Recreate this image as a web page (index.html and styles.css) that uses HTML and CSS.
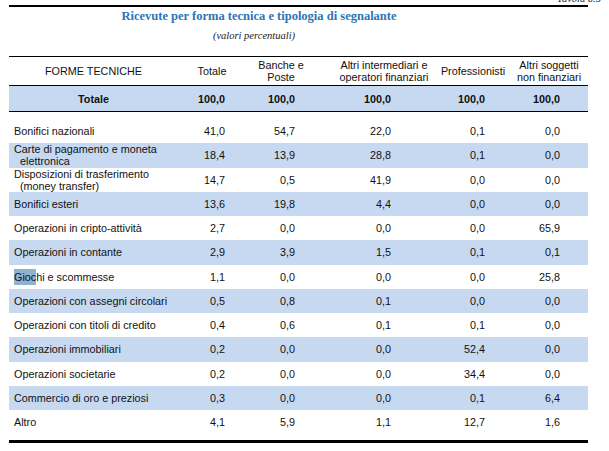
FILE: index.html
```html
<!DOCTYPE html>
<html lang="it">
<head>
<meta charset="utf-8">
<title>Ricevute per forma tecnica e tipologia di segnalante</title>
<link rel="stylesheet" href="styles.css">
</head>
<body>
<div class="page">
  <div class="tavola"><span>Tavola 6.5</span></div>
  <div class="sheet">
    <div class="caption">
      <div class="title">Ricevute per forma tecnica e tipologia di segnalante</div>
      <div class="subtitle">(valori percentuali)</div>
    </div>
    <div class="row head">
      <div>FORME TECNICHE</div>
      <div>Totale</div>
      <div>Banche e<br>Poste</div>
      <div class="h3">Altri intermediari e<br>operatori finanziari</div>
      <div>Professionisti</div>
      <div>Altri soggetti<br>non finanziari</div>
    </div>
    <div class="row total">
      <div class="lab-c">Totale</div>
      <div class="num">100,0</div>
      <div class="num">100,0</div>
      <div class="num">100,0</div>
      <div class="num">100,0</div>
      <div class="num">100,0</div>
    </div>
    <div class="spacer"></div>
    <div class="row item">
      <div class="lab">Bonifici nazionali</div>
      <div class="num">41,0</div><div class="num">54,7</div><div class="num">22,0</div><div class="num">0,1</div><div class="num">0,0</div>
    </div>
    <div class="row item alt">
      <div class="lab wrap">Carte di pagamento e moneta<br>elettronica</div>
      <div class="num">18,4</div><div class="num">13,9</div><div class="num">28,8</div><div class="num">0,1</div><div class="num">0,0</div>
    </div>
    <div class="row item">
      <div class="lab wrap">Disposizioni di trasferimento<br>(money transfer)</div>
      <div class="num">14,7</div><div class="num">0,5</div><div class="num">41,9</div><div class="num">0,0</div><div class="num">0,0</div>
    </div>
    <div class="row item alt">
      <div class="lab">Bonifici esteri</div>
      <div class="num">13,6</div><div class="num">19,8</div><div class="num">4,4</div><div class="num">0,0</div><div class="num">0,0</div>
    </div>
    <div class="row item">
      <div class="lab">Operazioni in cripto-attività</div>
      <div class="num">2,7</div><div class="num">0,0</div><div class="num">0,0</div><div class="num">0,0</div><div class="num">65,9</div>
    </div>
    <div class="row item alt">
      <div class="lab">Operazioni in contante</div>
      <div class="num">2,9</div><div class="num">3,9</div><div class="num">1,5</div><div class="num">0,1</div><div class="num">0,1</div>
    </div>
    <div class="row item">
      <div class="lab"><span class="sel">Gioc</span>hi e scommesse</div>
      <div class="num">1,1</div><div class="num">0,0</div><div class="num">0,0</div><div class="num">0,0</div><div class="num">25,8</div>
    </div>
    <div class="row item alt">
      <div class="lab">Operazioni con assegni circolari</div>
      <div class="num">0,5</div><div class="num">0,8</div><div class="num">0,1</div><div class="num">0,0</div><div class="num">0,0</div>
    </div>
    <div class="row item">
      <div class="lab">Operazioni con titoli di credito</div>
      <div class="num">0,4</div><div class="num">0,6</div><div class="num">0,1</div><div class="num">0,1</div><div class="num">0,0</div>
    </div>
    <div class="row item alt">
      <div class="lab">Operazioni immobiliari</div>
      <div class="num">0,2</div><div class="num">0,0</div><div class="num">0,0</div><div class="num">52,4</div><div class="num">0,0</div>
    </div>
    <div class="row item">
      <div class="lab">Operazioni societarie</div>
      <div class="num">0,2</div><div class="num">0,0</div><div class="num">0,0</div><div class="num">34,4</div><div class="num">0,0</div>
    </div>
    <div class="row item alt">
      <div class="lab">Commercio di oro e preziosi</div>
      <div class="num">0,3</div><div class="num">0,0</div><div class="num">0,0</div><div class="num">0,1</div><div class="num">6,4</div>
    </div>
    <div class="row item">
      <div class="lab">Altro</div>
      <div class="num">4,1</div><div class="num">5,9</div><div class="num">1,1</div><div class="num">12,7</div><div class="num">1,6</div>
    </div>
    <div class="end-rule"></div>
  </div>
</div>
</body>
</html>
```

FILE: styles.css
```css
* { box-sizing: content-box; }
html, body { margin: 0; padding: 0; background: #fff; }
body {
  font-family: "Liberation Sans", Arial, sans-serif;
  color: #111;
}
.page { width: 609px; }

.tavola {
  height: 5px;
  display: flex;
  justify-content: flex-end;
  align-items: flex-end;
  padding-right: 8px;
}
.tavola span {
  font: italic 10.5px/12px "Liberation Serif", "Times New Roman", serif;
  color: #222;
}

.sheet {
  margin-left: 9px;
  width: 579px;
  border-top: 2px solid #000;
}

.caption {
  text-align: center;
  padding: 1px 79px 13px 0;
  border-bottom: 1px solid #000;
}
.title {
  font: bold 12.5px/16px "Liberation Serif", "Times New Roman", serif;
  color: #2e74b5;
}
.subtitle {
  font: italic 10.5px/14px "Liberation Serif", "Times New Roman", serif;
  margin-top: 5px;
  padding-right: 10px;
  color: #222;
}

.row {
  display: grid;
  grid-template-columns: 169px 68px 70px 120px 74px 78px;
  align-items: center;
  font-size: 10.8px;
}

.head {
  height: 28px;
  line-height: 12.5px;
  text-align: center;
}
.head .h3 { padding-left: 16px; }

.total {
  height: 25px;
  background: #c6d9f1;
  border-top: 1px solid #000;
  border-bottom: 1px solid #000;
  font-weight: bold;
}
.lab-c { text-align: center; }

.spacer { height: 7px; }

.item {
  height: 24.25px;
  line-height: 12px;
}
.alt { background: #c6d9f1; }

.lab { padding-left: 5px; }
.lab.wrap { padding-left: 11px; text-indent: -6px; }

.sel {
  background: #8fb2d1;
  display: inline-block;
  line-height: 16px;
}

.num { text-align: right; }
.row .num:nth-child(2) { padding-right: 21px; }
.row .num:nth-child(3) { padding-right: 21px; }
.row .num:nth-child(4) { padding-right: 45px; }
.row .num:nth-child(5) { padding-right: 25px; }
.row .num:nth-child(6) { padding-right: 28px; }

.end-rule {
  margin-top: 6px;
  border-top: 3px solid #000;
}
```
